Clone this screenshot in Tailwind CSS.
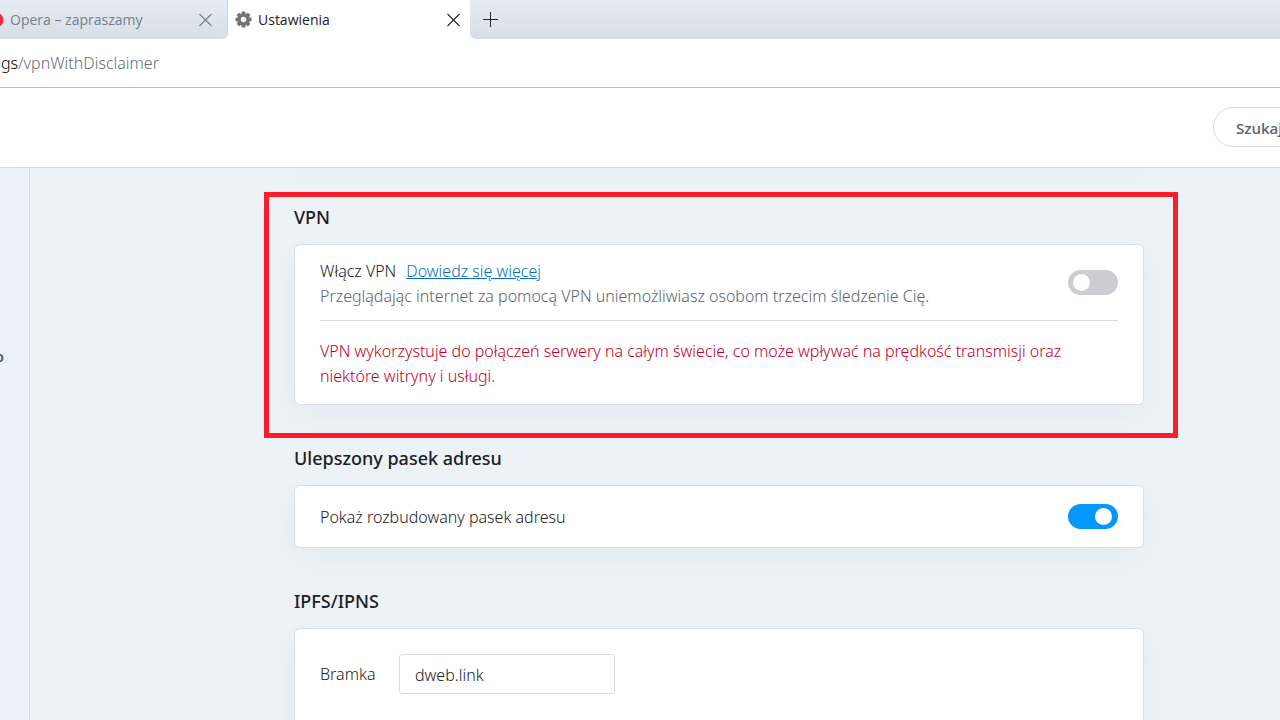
<!DOCTYPE html>
<html lang="pl">
<head>
<meta charset="utf-8">
<meta name="viewport" content="width=device-width, initial-scale=1">
<title>Ustawienia</title>
<script src="https://cdn.jsdelivr.net/npm/@tailwindcss/browser@4"></script>
</head>
<body class="flex h-screen flex-col overflow-hidden bg-white font-['Noto_Sans',sans-serif] text-base font-light text-[#1d2023]">
  <nav class="flex h-[39px] shrink-0 items-stretch bg-white font-['Open_Sans',sans-serif] text-sm font-normal" aria-label="Karty">
    <div class="flex w-[228px] shrink-0 items-center rounded-br-md border-r border-[#cdd4dc] bg-linear-to-b from-[#e5ecf5] to-[#d8dee4] pr-[14px] text-[#74808d]">
      <svg class="h-4 w-1 shrink-0" viewBox="12 0 4 16" aria-hidden="true"><circle cx="8" cy="8" r="7.5" fill="#ee2d3c"/></svg>
      <a href="#" class="ml-[6px] flex-1 truncate">Opera – zapraszamy</a>
      <button type="button" aria-label="Zamknij kartę"><svg class="h-4 w-4" viewBox="0 0 16 16" fill="none" stroke="#74808d" stroke-width="1.1"><path d="M2.500 2l12 12M14.500 2l-12 12"/></svg></button>
    </div>
    <div class="flex w-[242px] shrink-0 items-center bg-white pr-2 pl-[7px]">
      <svg class="h-[17px] w-[17px] shrink-0" viewBox="-8.500 -8.500 17 17" aria-hidden="true"><g fill="#747474"><rect x="-2" y="-8" width="4" height="16" rx="1"/><rect x="-2" y="-8" width="4" height="16" rx="1" transform="rotate(45)"/><rect x="-2" y="-8" width="4" height="16" rx="1" transform="rotate(90)"/><rect x="-2" y="-8" width="4" height="16" rx="1" transform="rotate(135)"/><circle r="6"/></g><circle r="2.700" fill="#fff"/></svg>
      <a href="#" class="ml-[6px] flex-1 truncate" aria-current="page">Ustawienia</a>
      <button type="button" aria-label="Zamknij kartę"><svg class="h-4 w-4" viewBox="0 0 16 16" fill="none" stroke="#25282b" stroke-width="1.1"><path d="M1.500 2l12 12M13.500 2l-12 12"/></svg></button>
    </div>
    <div class="flex flex-1 items-center rounded-bl-md bg-linear-to-b from-[#e5ecf5] to-[#d8dee4] pb-[2px] pl-3">
      <button type="button" aria-label="Nowa karta"><svg class="h-4 w-4" viewBox="0 0 16 16" fill="none" stroke="#25282b" stroke-width="1"><path d="M8.500 1v15M1 8.500h15"/></svg></button>
    </div>
  </nav>

  <div class="flex h-[49px] shrink-0 items-center overflow-hidden border-b border-[#b5bac0]">
    <div class="flex w-[159px] justify-end whitespace-nowrap"><span class="text-black">settings</span><span class="text-[#5f6d7c]">/vpnWithDisclaimer</span></div>
  </div>

  <header class="flex h-20 shrink-0 items-start justify-end overflow-hidden border-b border-[#d5dce2] pt-[19px]">
    <input type="search" aria-label="Szukaj" placeholder="Szukaj w ustawieniach" class="-mr-40 h-10 w-[227px] rounded-full border border-[#d8dbe2] pt-[2px] pl-[22px] font-['Open_Sans',sans-serif] text-[15px] font-semibold placeholder:text-[#5e6670]">
  </header>

  <div class="flex min-h-0 flex-1 bg-[#ecf2f6]">
    <aside class="w-[30px] shrink-0 overflow-hidden border-r border-[#d3dde9] bg-[#ebf1f8] pt-[179px]">
      <a href="#" class="flex w-1 justify-end text-sm font-semibold text-[#4c535b]">o</a>
    </aside>
    <main class="min-w-0 flex-1 overflow-hidden pr-[136px] pl-[264px]">
      <div class="-mt-5 h-4 rounded-md border border-[#d7dfe8] bg-white shadow-[0_10px_30px_rgba(60,80,110,0.04)]"></div>

      <section class="relative pt-10" aria-labelledby="vpn-title">
        <div class="pointer-events-none absolute top-7 -right-[34px] -bottom-[33px] -left-[30px] z-10 border-[5px] border-[#fa1e2d]"></div>
        <h2 id="vpn-title" class="mb-[14px] text-[18px] leading-[26px] font-medium text-[#1d2023]">VPN</h2>
        <div class="rounded-md border border-[#d7dfe8] bg-white px-[25px] pt-[14px] pb-[15px] leading-[25px] shadow-[0_10px_30px_rgba(60,80,110,0.04)]">
          <div class="flex items-start justify-between border-b border-[#d7dce5] pb-[11px]">
            <div>
              <label for="vpn">Włącz VPN</label><a href="#" class="ml-[10px] text-[#0a70b8] underline">Dowiedz się więcej</a>
              <p class="text-[#5e636d]">Przeglądając internet za pomocą VPN uniemożliwiasz osobom trzecim śledzenie Cię.</p>
            </div>
            <input id="vpn" type="checkbox" role="switch" class="relative mt-[11px] h-[25px] w-[50px] shrink-0 appearance-none rounded-full bg-[#cdccd3] before:absolute before:top-1 before:left-[5px] before:h-[17px] before:w-[17px] before:rounded-full before:bg-white checked:bg-[#0696ff] checked:before:left-[28px]">
          </div>
          <p class="max-w-[750px] pt-[18px] text-[#c00028]">VPN wykorzystuje do połączeń serwery na całym świecie, co może wpływać na prędkość transmisji oraz niektóre witryny i usługi.</p>
        </div>
      </section>

      <section class="pt-10" aria-labelledby="bar-title">
        <h2 id="bar-title" class="mb-[14px] text-[18px] leading-[26px] font-medium text-[#1d2023]">Ulepszony pasek adresu</h2>
        <div class="flex h-[63px] items-center justify-between rounded-md border border-[#d7dfe8] bg-white px-[25px] shadow-[0_10px_30px_rgba(60,80,110,0.04)]">
          <label for="bar">Pokaż rozbudowany pasek adresu</label>
          <input id="bar" type="checkbox" role="switch" checked class="relative h-[25px] w-[50px] shrink-0 appearance-none rounded-full bg-[#cdccd3] before:absolute before:top-1 before:left-[5px] before:h-[17px] before:w-[17px] before:rounded-full before:bg-white checked:bg-[#0696ff] checked:before:left-[27px]">
        </div>
      </section>

      <section class="pt-10" aria-labelledby="ipfs-title">
        <h2 id="ipfs-title" class="mb-[14px] text-[18px] leading-[26px] font-medium text-[#1d2023]">IPFS/IPNS</h2>
        <div class="flex items-center rounded-md border border-[#d7dfe8] bg-white px-[25px] pt-[25px] pb-20 shadow-[0_10px_30px_rgba(60,80,110,0.04)]">
          <label for="gateway" class="w-[79px]">Bramka</label>
          <input id="gateway" type="text" value="dweb.link" class="h-10 w-[216px] rounded-[3px] border border-[#d8dbe2] px-[15px] pt-[2px]">
        </div>
      </section>
    </main>
  </div>
</body>
</html>
